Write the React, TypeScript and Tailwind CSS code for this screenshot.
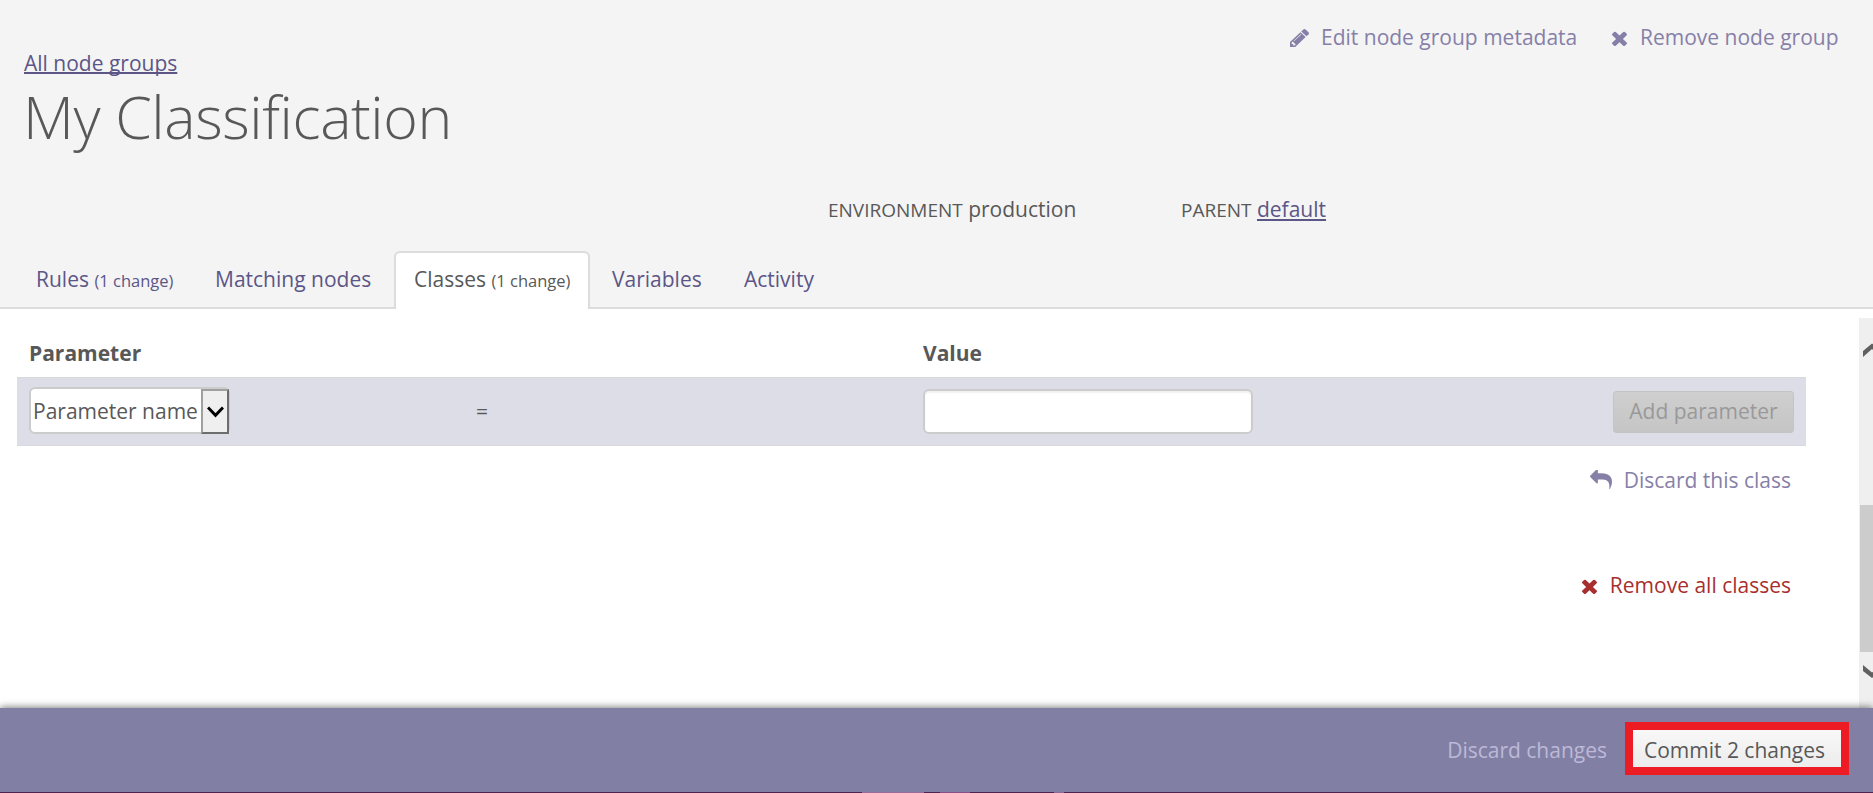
import type { ReactNode } from "react";

const TimesIcon = ({ className }: { className: string }) => (
  <svg viewBox="302 302 1188 1252" preserveAspectRatio="none" fill="currentColor" className={className}>
    <path d="M1490 1322q0 40-28 68l-136 136q-28 28-68 28t-68-28l-294-294-294 294q-28 28-68 28t-68-28l-136-136q-28-28-28-68t28-68l294-294-294-294q-28-28-28-68t28-68l136-136q28-28 68-28t68 28l294 294 294-294q28-28 68-28t68 28l136 136q28 28 28 68t-28 68l-294 294 294 294q28 28 28 68z" />
  </svg>
);

const PencilIcon = () => (
  <svg viewBox="0 20 1515 1516" fill="currentColor" preserveAspectRatio="none" className="h-[18px] w-[19px]">
    <path d="M363 1408l91-91-235-235-91 91v107h128v128h107zm523-928q0-22-22-22-10 0-17 7l-542 542q-7 7-7 17 0 22 22 22 10 0 17-7l542-542q7-7 7-17zm-54-192l416 416-832 832h-416v-416zm683 96q0 53-37 90l-166 166-416-416 166-165q36-38 90-38 53 0 91 38l235 234q37 39 37 91z" />
  </svg>
);

const ReplyIcon = () => (
  <svg viewBox="0 128 1792 1536" preserveAspectRatio="none" fill="currentColor" className="h-[19px] w-[22px]">
    <path d="M1792 1120q0 166-127 451-3 7-10.5 24t-13.5 30-13 22q-12 17-28 17-15 0-23.5-10t-8.5-25q0-9 2.5-26.5t2.5-23.5q5-68 5-123 0-101-17.5-181t-48.5-138.5-80-101-105.5-69.5-133-42.5-154-21.5-175.5-6h-224v256q0 26-19 45t-45 19-45-19l-512-512q-19-19-19-45t19-45l512-512q19-19 45-19t45 19 19 45v256h224q713 0 875 403 53 134 53 333z" />
  </svg>
);

const Tab = ({ className, children }: { className: string; children: ReactNode }) => (
  <a className={`${className} text-[#5c5687]`}>{children}</a>
);

export default function App() {
  return (
    <div className="flex h-[793px] w-[1873px] flex-col overflow-hidden bg-white font-['Open_Sans',sans-serif] text-[21px] leading-[30px] whitespace-nowrap text-[#585858]">
      <header className="flex h-[309px] shrink-0 flex-col bg-[#f4f4f4]">
        <div className="flex h-[48px] shrink-0 items-start justify-end pt-[22px] pr-[34px] text-[#8680a8]">
          <span className="mt-[7px] mr-[12px]"><PencilIcon /></span>
          <a className="w-[257px]">Edit node group metadata</a>
          <TimesIcon className="mt-[9px] mr-[13px] ml-[34px] h-[15px] w-[15px]" />
          <a className="w-[199px]">Remove node group</a>
        </div>
        <a className="ml-6 h-[30px] w-[154px] text-[#5c5687] underline decoration-2 underline-offset-[1px] [text-decoration-skip-ink:none]">All node groups</a>
        <h1 className="-mt-[2px] ml-[23px] text-[59px] leading-[80px] font-light tracking-[-0.4px]">My Classification</h1>
        <div className="mt-[38px] flex">
          <div className="ml-[828px] w-[353px]">
            <span className="text-[19px]">ENVIRONMENT</span> production
          </div>
          <div>
            <span className="text-[19px]">PARENT</span>{" "}
            <a className="text-[#5c5687] underline decoration-2 underline-offset-[2px]">default</a>
          </div>
        </div>
        <nav className="mt-auto flex h-[58px] items-stretch">
          <div className="flex w-[394px] border-b-2 border-[#dcdcdc] pt-[13px]">
            <Tab className="ml-[36px] w-[179px]">Rules <span className="text-[16.5px]">(1 change)</span></Tab>
            <Tab className="w-[160px]">Matching nodes</Tab>
          </div>
          <div className="w-[196px] rounded-t-[6px] border-2 border-b-0 border-[#dcdcdc] bg-white pt-[11px] pl-[18px]">
            Classes <span className="text-[16.5px]">(1 change)</span>
          </div>
          <div className="flex flex-1 border-b-2 border-[#dcdcdc] pt-[13px]">
            <Tab className="ml-[22px] w-[132px]">Variables</Tab>
            <Tab className="">Activity</Tab>
          </div>
        </nav>
      </header>

      <main className="flex min-h-0 flex-1">
        <section className="w-[1859px] pl-[17px]">
          <div className="flex h-[68px] pt-[29px] pl-[12px] font-bold">
            <div className="w-[894px]">Parameter</div>
            <div>Value</div>
          </div>
          <div className="flex h-[69px] w-[1789px] items-center border-y border-[#d9d9dd] bg-[#dddde8] pr-[12px] pl-[12px]">
            <div className="-mt-[2px] flex h-[47px] w-[201px] justify-between rounded-[6px] border-2 border-[#cccccc] bg-white pt-[7px] pl-[2px]">
              <span>Parameter name</span>
              <span className="-mt-[7px] -mr-px flex h-[45px] w-[28px] shrink-0 items-center justify-center border-2 border-[#6d6d6d] border-t-[#a0a0a0] border-l-[#a0a0a0] bg-[#efefef]">
                <svg viewBox="0 0 17 12" className="h-[12px] w-[17px]" fill="none" stroke="#000" strokeWidth="3"><path d="M1 1.5L8.5 9.3L16 1.5" /></svg>
              </span>
            </div>
            <span className="ml-[246px] w-[447px] pb-[2px]">=</span>
            <div className="h-[45px] w-[330px] rounded-[6px] border-2 border-[#cccccc] bg-white shadow-[inset_0_2px_2px_rgba(0,0,0,0.06)]" />
            <button className="ml-auto h-[42px] w-[181px] rounded-[3px] border border-[#c4c4c4] bg-linear-to-b from-[#cfcfcf] to-[#c5c5c5] pb-[2px] leading-[38px] text-[#999]">Add parameter</button>
          </div>
          <div className="mt-[19px] flex w-[1774px] justify-end text-[#8680a8]">
            <span className="mt-[5px] mr-[12px]"><ReplyIcon /></span>
            <a>Discard this class</a>
          </div>
          <div className="mt-[75px] flex w-[1774px] justify-end text-[#a72f2f]">
            <TimesIcon className="mt-[9px] mr-[13px] h-[15px] w-[15px]" />
            <a>Remove all classes</a>
          </div>
        </section>
        <aside className="mt-[9px] flex flex-1 flex-col bg-[#efefef] pl-px">
          <svg viewBox="0 0 13 187" className="h-[187px] w-[13px]" fill="#606060"><path d="M3 33L12 25.5L21 33V39L12 31L3 39z" /></svg>
          <div className="h-[147px] bg-[#cccccc]" />
          <svg viewBox="0 0 13 56" className="h-[56px] w-[13px]" fill="#606060"><path d="M3 13L12 20.5L21 13V19L12 26L3 19z" /></svg>
        </aside>
      </main>

      <footer className="relative flex h-[85px] shrink-0 flex-col bg-[#827fa5] shadow-[0_-1px_7px_rgba(0,0,0,0.5)]">
        <div className="flex h-[84px] items-start justify-end pt-[14px] pr-[24px]">
          <a className="mt-[13px] mr-[18px] leading-[30px] text-[#bcb9d7]">Discard changes</a>
          <div className="h-[53px] w-[224px] border-8 border-[#ed1c24]">
            <button className="h-[37px] w-[208px] bg-linear-to-b from-[#f8f8f8] to-[#ececec] pt-[4px] pr-[5px] leading-[33px]">Commit 2 changes</button>
          </div>
        </div>
        <div className="flex h-px bg-[#4f2350]">
          <div className="ml-[862px] h-px w-[62px] bg-[#9a6c99]" />
          <div className="ml-[16px] h-px w-[30px] bg-[#8a4f86]" />
          <div className="ml-[84px] h-px w-[10px] bg-[#8d6a96]" />
        </div>
      </footer>
    </div>
  );
}
